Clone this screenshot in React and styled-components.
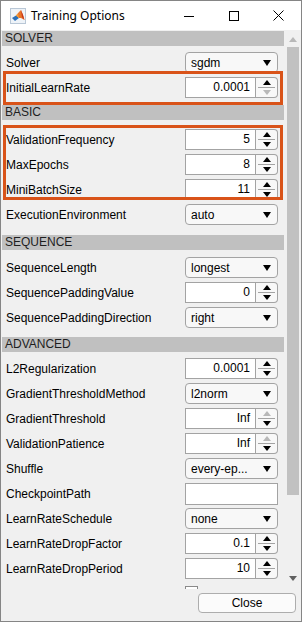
import styled, { createGlobalStyle } from "styled-components";

const GlobalStyle = createGlobalStyle`
  html, body {
    margin: 0;
    padding: 0;
    background: #f0f0f0;
  }
  body {
    font-family: "Liberation Sans", Arial, sans-serif;
    font-size: 12px;
    color: #000;
  }
`;

const ORANGE = "#d95319";
const EDGE = "#a3a3a3";

const Window = styled.div`
  width: 302px;
  height: 622px;
  box-sizing: border-box;
  border: 1px solid #858585;
  background: #f0f0f0;
  display: flex;
  flex-direction: column;
  overflow: hidden;
`;

const TitleBar = styled.div`
  height: 29px;
  flex: none;
  background: #fff;
  display: flex;
  align-items: center;
`;

const TitleIcon = styled.svg`
  width: 16px;
  height: 16px;
  margin: 0 5px 0 9px;
`;

const TitleText = styled.div`
  flex: 1;
  font-family: "Noto Sans", "Liberation Sans", sans-serif;
  font-size: 12px;
  color: #000;
`;

const CaptionButton = styled.div`
  width: 45px;
  height: 29px;
  display: flex;
  align-items: center;
  justify-content: center;
  svg {
    display: block;
  }
`;

const Main = styled.div`
  height: 559px;
  flex: none;
  padding-top: 1px;
  box-sizing: border-box;
  display: flex;
`;

const Panel = styled.div`
  flex: 1;
  overflow: hidden;
`;

const Header = styled.div`
  height: 15px;
  line-height: 15px;
  margin: 0 1px;
  padding-left: 3px;
  background: #c0c0c0;
  color: #1e1e1e;
  font-size: 12px;
`;

const Body = styled.div`
  padding: ${(p) => p.$pt}px 0 ${(p) => p.$pb}px;
`;

const Group = styled.div`
  position: relative;
  &::after {
    content: "";
    position: absolute;
    left: 2px;
    right: 2px;
    top: ${(p) => p.$top}px;
    bottom: ${(p) => p.$bottom}px;
    border: 3px solid ${ORANGE};
    pointer-events: none;
  }
`;

const Row = styled.div`
  height: 25px;
  display: grid;
  grid-template-columns: 1fr 93px;
  align-items: center;
  padding: 0 7px 0 5px;
`;

const Label = styled.div`
  white-space: nowrap;
`;

const Select = styled.div`
  height: 21px;
  box-sizing: border-box;
  border: 1px solid ${EDGE};
  border-radius: 4px;
  background: #f8f8f8;
  display: flex;
  align-items: center;
  padding: 0 6px 0 5px;
`;

const SelectValue = styled.span`
  flex: 1;
  white-space: nowrap;
`;

const Caret = styled.span`
  margin-left: auto;
  width: 0;
  height: 0;
  border-left: 4px solid transparent;
  border-right: 4px solid transparent;
  border-top: 6px solid #000;
`;

const Spinner = styled.div`
  height: 21px;
  display: flex;
`;

const SpinInput = styled.div`
  width: 71px;
  box-sizing: border-box;
  border: 1px solid ${EDGE};
  background: #fff;
  text-align: right;
  padding-right: 5px;
  line-height: 19px;
`;

const SpinButtons = styled.div`
  width: 22px;
  box-sizing: border-box;
  border: 1px solid ${EDGE};
  border-left: none;
  border-radius: 0 4px 4px 0;
  background: #f8f8f8;
  display: flex;
  flex-direction: column;
  padding: 0 2px;
`;

const SpinHalf = styled.div`
  flex: 1;
  display: flex;
  align-items: center;
  justify-content: center;
  & + & {
    border-top: 1px solid ${EDGE};
  }
`;

const Tri = styled.span`
  width: 0;
  height: 0;
  border-left: 4px solid transparent;
  border-right: 4px solid transparent;
  ${(p) =>
    p.$up
      ? `border-bottom: 5px solid ${p.$color || (p.$off ? "#b8b8b8" : "#000")};`
      : `border-top: 5px solid ${p.$color || (p.$off ? "#b8b8b8" : "#000")};`}
`;

const TextField = styled.div`
  height: 22px;
  box-sizing: border-box;
  border: 1px solid ${EDGE};
  background: #fff;
`;

const CheckBox = styled.div`
  width: 13px;
  height: 13px;
  box-sizing: border-box;
  border: 1px solid #8a8a8a;
  background: #fff;
  margin-top: 5px;
  align-self: start;
`;

const Scrollbar = styled.div`
  width: 16px;
  flex: none;
  display: flex;
  flex-direction: column;
  padding-bottom: 3px;
`;

const ScrollArrow = styled.div`
  height: 16px;
  flex: none;
  display: flex;
  align-items: center;
  justify-content: center;
`;

const ScrollTrack = styled.div`
  flex: 1;
`;

const Thumb = styled.div`
  height: 448px;
  margin: 0 2px;
  background: #c1c1c1;
`;

const Footer = styled.div`
  flex: 1;
  display: flex;
  justify-content: flex-end;
  align-items: flex-start;
  padding: 4px 5px 0 0;
`;

const Button = styled.div`
  width: 98px;
  height: 20px;
  box-sizing: border-box;
  border: 1px solid #adadad;
  border-radius: 4px;
  background: #fbfbfb;
  display: flex;
  align-items: center;
  justify-content: center;
`;

function Dropdown({ value }) {
  return (
    <Select>
      <SelectValue>{value}</SelectValue>
      <Caret />
    </Select>
  );
}

function NumSpinner({ value, upOff, downOff }) {
  return (
    <Spinner>
      <SpinInput>{value}</SpinInput>
      <SpinButtons>
        <SpinHalf>
          <Tri $up $off={upOff} />
        </SpinHalf>
        <SpinHalf>
          <Tri $off={downOff} />
        </SpinHalf>
      </SpinButtons>
    </Spinner>
  );
}

function Control({ item }) {
  if (item.type === "select") return <Dropdown value={item.value} />;
  if (item.type === "spin")
    return <NumSpinner value={item.value} upOff={item.upOff} downOff={item.downOff} />;
  if (item.type === "text") return <TextField />;
  return <CheckBox />;
}

function OptionRow({ item }) {
  return (
    <Row>
      <Label>{item.label}</Label>
      <Control item={item} />
    </Row>
  );
}

const sections = [
  {
    title: "SOLVER",
    pt: 4,
    pb: 5,
    groups: [
      { rows: [{ id: "solver", label: "Solver", type: "select", value: "sgdm" }] },
      {
        mark: { top: -4, bottom: -5 },
        rows: [{ id: "ilr", label: "InitialLearnRate", type: "spin", value: "0.0001", downOff: true }],
      },
    ],
  },
  {
    title: "BASIC",
    pt: 7,
    pb: 8,
    groups: [
      {
        mark: { top: -2, bottom: 2 },
        rows: [
          { id: "vf", label: "ValidationFrequency", type: "spin", value: "5" },
          { id: "me", label: "MaxEpochs", type: "spin", value: "8" },
          { id: "mbs", label: "MiniBatchSize", type: "spin", value: "11" },
        ],
      },
      { rows: [{ id: "ee", label: "ExecutionEnvironment", type: "select", value: "auto" }] },
    ],
  },
  {
    title: "SEQUENCE",
    pt: 5,
    pb: 7,
    groups: [
      {
        rows: [
          { id: "sl", label: "SequenceLength", type: "select", value: "longest" },
          { id: "spv", label: "SequencePaddingValue", type: "spin", value: "0" },
          { id: "spd", label: "SequencePaddingDirection", type: "select", value: "right" },
        ],
      },
    ],
  },
  {
    title: "ADVANCED",
    pt: 4,
    pb: 8,
    groups: [
      {
        rows: [
          { id: "l2", label: "L2Regularization", type: "spin", value: "0.0001" },
          { id: "gtm", label: "GradientThresholdMethod", type: "select", value: "l2norm" },
          { id: "gt", label: "GradientThreshold", type: "spin", value: "Inf", upOff: true },
          { id: "vp", label: "ValidationPatience", type: "spin", value: "Inf", upOff: true },
          { id: "sh", label: "Shuffle", type: "select", value: "every-ep..." },
          { id: "cp", label: "CheckpointPath", type: "text" },
          { id: "lrs", label: "LearnRateSchedule", type: "select", value: "none" },
          { id: "lrdf", label: "LearnRateDropFactor", type: "spin", value: "0.1" },
          { id: "lrdp", label: "LearnRateDropPeriod", type: "spin", value: "10" },
          { id: "rin", label: "", type: "check" },
        ],
      },
    ],
  },
];

function MatlabIcon() {
  return (
    <TitleIcon viewBox="0 0 16 16">
      <rect x="0.5" y="0.5" width="15" height="15" fill="#eef3f8" stroke="#b9c7d6" />
      <polygon points="2,10 6,7.5 9,10 5,13" fill="#2a6fb8" />
      <polygon points="6,7.5 9,4 11,2 13,7 14.5,12 11,10 9,10" fill="#e8742a" />
      <polygon points="11,2 13,7 14.5,12 12,9" fill="#c7361b" />
      <polygon points="6,7.5 8,5.5 9,10" fill="#f2a13a" />
    </TitleIcon>
  );
}

function GroupRows({ group }) {
  const rows = group.rows.map((r) => <OptionRow key={r.id} item={r} />);
  if (!group.mark) return <div>{rows}</div>;
  return (
    <Group $top={group.mark.top} $bottom={group.mark.bottom}>
      {rows}
    </Group>
  );
}

export default function App() {
  return (
    <>
      <GlobalStyle />
      <Window>
        <TitleBar>
          <MatlabIcon />
          <TitleText>Training Options</TitleText>
          <CaptionButton>
            <svg width="10" height="10" viewBox="0 0 10 10">
              <line x1="0" y1="5.5" x2="10" y2="5.5" stroke="#000" strokeWidth="1" />
            </svg>
          </CaptionButton>
          <CaptionButton>
            <svg width="10" height="10" viewBox="0 0 10 10">
              <rect x="0.5" y="0.5" width="9" height="9" fill="none" stroke="#000" strokeWidth="1" />
            </svg>
          </CaptionButton>
          <CaptionButton>
            <svg width="11" height="11" viewBox="0 0 11 11">
              <path d="M0.5 0.5 L10.5 10.5 M10.5 0.5 L0.5 10.5" stroke="#000" strokeWidth="1" />
            </svg>
          </CaptionButton>
        </TitleBar>
        <Main>
          <Panel>
            {sections.map((s) => (
              <div key={s.title}>
                <Header>{s.title}</Header>
                <Body $pt={s.pt} $pb={s.pb}>
                  {s.groups.map((g, i) => (
                    <GroupRows key={i} group={g} />
                  ))}
                </Body>
              </div>
            ))}
          </Panel>
          <Scrollbar>
            <ScrollArrow>
              <Tri $up $off />
            </ScrollArrow>
            <ScrollTrack>
              <Thumb />
            </ScrollTrack>
            <ScrollArrow>
              <Tri $color="#606060" />
            </ScrollArrow>
          </Scrollbar>
        </Main>
        <Footer>
          <Button>Close</Button>
        </Footer>
      </Window>
    </>
  );
}
